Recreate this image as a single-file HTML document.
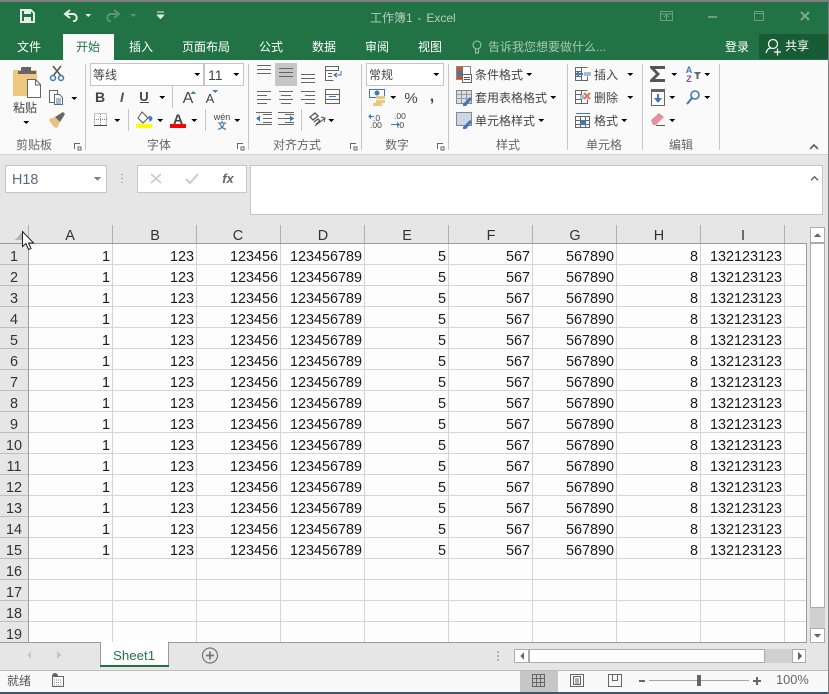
<!DOCTYPE html>
<html lang="zh-CN"><head><meta charset="utf-8"><title>工作簿1 - Excel</title>
<style>
html,body{margin:0;padding:0;background:#e6e6e6;width:829px;height:694px;overflow:hidden}
svg{display:block;position:absolute;left:0;top:0}
text{font-family:"Liberation Sans","Noto Sans CJK SC",sans-serif}
.cj{font-size:12px;fill:#444}
.tb{font-size:12px;fill:#fff}
.gl{font-size:12px;fill:#666;text-anchor:middle}
.c{font-size:14.4px;fill:#1a1a1a;text-anchor:end}
.rh{font-size:14.4px;fill:#333;text-anchor:middle}
.ch{font-size:14.4px;fill:#333;text-anchor:middle}
.ar{fill:#666}
.ln{stroke:#666;stroke-width:1;fill:none}
.sp{stroke:#c6c6c6;stroke-width:1}
.bl{fill:#4a7fb5}
</style></head><body>
<svg width="829" height="694" viewBox="0 0 829 694" xmlns="http://www.w3.org/2000/svg" shape-rendering="crispEdges">
<defs>
<path id="da" d="M0 0h6l-3 3z"/>
<path id="ln3" d="M0 .5h14M0 4.5h14M0 8.5h14"/>
</defs>
<rect width="829" height="694" fill="#e6e6e6"/>
<!-- title -->
<rect y="0" width="829" height="60" fill="#217346"/>
<rect width="829" height="2" fill="#7f7f7f"/>
<rect x="63" y="34" width="51" height="26" fill="#fafafa"/>
<rect x="759" y="34" width="70" height="25" fill="#185c37"/>
<!-- QAT -->
<g fill="none" stroke="#e6efe9" stroke-width="2">
<path d="M21 10h10l3 3v9H21z"/>
</g>
<rect x="24" y="10" width="7" height="4" fill="#e6efe9"/><rect x="24" y="17" width="7" height="5" fill="#e6efe9"/>
<g shape-rendering="geometricPrecision">
<path d="M70 10l-5 4 5 4M65 14h8c5 0 5 8 0 7" fill="none" stroke="#e6efe9" stroke-width="2"/>
<path d="M114 10l5 4-5 4M119 14h-8c-5 0-5 8 0 7" fill="none" stroke="#5d9474" stroke-width="2"/>
</g>
<use href="#da" x="85" y="14" fill="#e6efe9"/><use href="#da" x="130" y="14" fill="#5d9474"/>
<path d="M157 12h7M157 15h7l-3.500 4z" fill="#e6efe9" stroke="#e6efe9" stroke-width=".6"/>
<text x="370" y="22" font-size="12" fill="#b4cfc0" word-spacing="1.500">工作簿1 - Excel</text>
<!-- window controls -->
<g fill="none" stroke="#6f9f83" stroke-width="1">
<rect x="660.500" y="11.500" width="12" height="9"/><path d="M661 14h11M666.500 20v-4M664 17l2.500-2 2.500 2"/>
<rect x="754.500" y="11.500" width="9" height="9"/><path d="M755 13.500h8"/>
</g>
<rect x="708" y="16" width="9" height="2" fill="#6f9f83"/>
<path d="M801 12l8 8M809 12l-8 8" stroke="#7da98e" stroke-width="2" shape-rendering="geometricPrecision"/>
<!-- tabs -->
<text class="tb" x="17" y="51">文件</text>
<text x="76" y="51" font-size="12" fill="#217346">开始</text>
<text class="tb" x="129" y="51">插入</text>
<text class="tb" x="182" y="51">页面布局</text>
<text class="tb" x="259" y="51">公式</text>
<text class="tb" x="312" y="51">数据</text>
<text class="tb" x="365" y="51">审阅</text>
<text class="tb" x="418" y="51">视图</text>
<g shape-rendering="geometricPrecision" fill="none" stroke="#a6c8b2"><circle cx="477" cy="45" r="4"/><path d="M475.500 49v4h3v-4"/></g>
<text x="488" y="51" font-size="12" fill="#a6c8b2">告诉我您想要做什么...</text>
<text class="tb" x="725" y="51">登录</text>
<g shape-rendering="geometricPrecision" fill="none" stroke="#fff" stroke-width="1.200"><circle cx="773" cy="44" r="4.500"/><path d="M766 53c1-4 3-5 5-5M774 52h7M777.500 48.500v7"/></g>
<text class="tb" x="785" y="50">共享</text>
<!-- ribbon -->
<rect y="60" width="829" height="94" fill="#fafafa"/>
<rect y="154" width="829" height="1" fill="#d4d4d4"/>
<g class="sp"><path d="M85.500 64v86M248.500 64v86M361.500 64v86M448.500 64v86M567.500 64v86M642.500 64v86M719.500 64v86"/>
<path d="M172.500 86v22M128.500 109v22M205.500 109v22M301.500 109v22" /></g>
<!-- clipboard group -->
<rect x="13" y="70" width="24" height="26" fill="#edc87e"/>
<rect x="21" y="67" width="10" height="5" rx="1" fill="#666"/><rect x="18" y="71" width="18" height="3" fill="#666"/>
<path d="M27.500 79.500h8l5 5v13h-13z" fill="#fff" stroke="#666"/>
<path d="M35.500 80v5h5" fill="none" stroke="#666"/>
<text class="cj" x="13" y="112" fill="#333">粘贴</text>
<use href="#da" x="23" y="121"/>
<g shape-rendering="geometricPrecision" fill="none">
<path d="M53 66l8 10M61 66l-8 10" stroke="#555" stroke-width="1.500"/>
<circle cx="53" cy="78" r="2.500" stroke="#3f78b5" stroke-width="1.500"/><circle cx="61" cy="78" r="2.500" stroke="#3f78b5" stroke-width="1.500"/>
</g>
<path d="M49.500 90.500h8v12h-8z" fill="#fff" stroke="#666"/>
<path d="M54.500 94.500h5l3 3v7h-8z" fill="#fff" stroke="#666"/>
<path d="M56 99h5M56 101h5M56 103h5" stroke="#3f78b5"/>
<use href="#da" x="71" y="97"/>
<g shape-rendering="geometricPrecision"><path d="M49 119l6-2 5 5-3 6c-3 0-7-5-8-9z" fill="#e8c184"/><path d="M55 117l8-5 2 2-5 8z" fill="#666"/></g>
<text class="gl" x="34" y="149">剪贴板</text>
<path d="M74 143.500h6M74.500 143v6M78 147h3v3h-3z" class="ln"/>
<!-- font group -->
<rect x="90.500" y="63.500" width="113" height="22" fill="#fff" stroke="#c6c6c6"/>
<rect x="204.500" y="63.500" width="39" height="22" fill="#fff" stroke="#c6c6c6"/>
<text class="cj" x="93" y="79">等线</text>
<text x="208" y="80" font-size="14" fill="#444">11</text>
<use href="#da" x="194" y="73" /><use href="#da" x="233" y="73"/>
<text x="100" y="102" font-size="14" font-weight="bold" fill="#444" text-anchor="middle" font-family="Liberation Sans">B</text>
<text x="122" y="102" font-size="14" font-style="italic" font-weight="bold" fill="#555" text-anchor="middle" font-family="Liberation Serif">I</text>
<text x="144" y="101" font-size="13" font-weight="bold" fill="#444" text-anchor="middle">U</text>
<rect x="140" y="102" width="9" height="1" fill="#444"/>
<use href="#da" x="159" y="96"/>
<text x="188" y="103" font-size="16" fill="#444" text-anchor="middle">A</text>
<path d="M190 94l3-3 3 3z" fill="#4a7fb5"/>
<text x="210" y="103" font-size="13" fill="#444" text-anchor="middle">A</text>
<path d="M212 90h6l-3 3z" fill="#4a7fb5"/>
<rect x="94.500" y="113.500" width="12" height="12" fill="none" stroke="#888" stroke-dasharray="1 1"/>
<path d="M100.500 114v12M94 119.500h13" stroke="#888" stroke-dasharray="1 1"/>
<path d="M94 125.500h13" stroke="#444"/>
<use href="#da" x="114" y="119"/>
<path d="M142 112l6 6-5 5-5-5z" fill="#fff" stroke="#555" shape-rendering="geometricPrecision"/>
<path d="M148 117a2.500 2.500 0 0 1 4 3l-2 2z" fill="#4a7fb5" shape-rendering="geometricPrecision"/>
<rect x="136" y="124" width="16" height="4" fill="#ffff00"/>
<use href="#da" x="157" y="119"/>
<text x="178" y="124" font-size="14" font-weight="bold" fill="#444" text-anchor="middle">A</text>
<rect x="170" y="124" width="16" height="4" fill="#ff0000"/>
<use href="#da" x="191" y="119"/>
<text x="222" y="120" font-size="9" fill="#444" text-anchor="middle">wén</text>
<text x="222" y="129" font-size="9" font-weight="bold" fill="#3f78b5" text-anchor="middle">文</text>
<use href="#da" x="234" y="119"/>
<text class="gl" x="159" y="149">字体</text>
<path d="M237 143.500h6M237.500 143v6M241 147h3v3h-3z" class="ln"/>
<!-- align group -->
<rect x="275" y="63" width="22" height="23" fill="#c6c6c6"/>
<g class="ln">
<use href="#ln3" x="257" y="65"/><use href="#ln3" x="279" y="68"/><use href="#ln3" x="301" y="74"/>
<path d="M257 91.500h14M257 95.500h10M257 99.500h14M257 103.500h10"/>
<path d="M279 91.500h14M281 95.500h10M279 99.500h14M281 103.500h10"/>
<path d="M301 91.500h14M305 95.500h10M301 99.500h14M305 103.500h10"/>
<path d="M325.500 66.500h13v4h-13zM325.500 70.500v10h8M328 73.500h4M328 76.500h4"/>
<rect x="325.500" y="89.500" width="14" height="14"/><path d="M326 94.500h13M326 99.500h13"/>
<path d="M263 114.500h9M263 118.500h9M263 122.500h9M256 124.500h16M256 112.500h16"/>
<path d="M285 114.500h9M285 118.500h9M285 122.500h9M278 124.500h16M278 112.500h16"/>
</g>
<path d="M341 71v4h-6M337 73l-3 2 3 2" fill="none" stroke="#3f78b5"/>
<path d="M329 96.500h7" stroke="#3f78b5"/>
<path d="M256 118.500l4-3v6zM262 118.500h-3" fill="#3f78b5"/><path d="M294 118.500l-4-3v6z" fill="#3f78b5"/><path d="M278 118h7v1h-7z" fill="#3f78b5"/>
<g shape-rendering="geometricPrecision" fill="none" stroke="#555"><path d="M310 117l5-4 3 3-5 4zM314 122l4-3 2 2-4 3" stroke-width="1.300"/><path d="M315 126l10-8M321 117l4 1-1 4"/></g>
<use href="#da" x="328" y="119"/>
<text class="gl" x="297" y="149">对齐方式</text>
<path d="M350 143.500h6M350.500 143v6M354 147h3v3h-3z" class="ln"/>
<!-- number group -->
<rect x="366.500" y="63.500" width="77" height="22" fill="#fff" stroke="#c6c6c6"/>
<text class="cj" x="369" y="79">常规</text>
<use href="#da" x="433" y="73"/>
<rect x="369.500" y="89.500" width="15" height="8" fill="#fff" stroke="#3f78b5"/><circle cx="377" cy="93" r="2.500" fill="#3f78b5" shape-rendering="geometricPrecision"/>
<rect x="376" y="96" width="9" height="3" fill="#edc87e"/><rect x="376" y="100" width="9" height="3" fill="#edc87e"/><rect x="373" y="103" width="9" height="3" fill="#edc87e"/>
<use href="#da" x="390" y="96"/>
<text x="411" y="103" font-size="15" fill="#444" text-anchor="middle">%</text>
<text x="432" y="101" font-size="16" font-weight="bold" fill="#444" text-anchor="middle">,</text>
<text x="373" y="121" font-size="8.500" fill="#444">.0</text><text x="370" y="128" font-size="8.500" fill="#444">.00</text>
<path d="M369 116.500h5" stroke="#3f78b5"/><path d="M368 116.500l3-2.500v5z" fill="#3f78b5"/>
<text x="394" y="119" font-size="8.500" fill="#444">.00</text><text x="397" y="128" font-size="8.500" fill="#444">.0</text>
<path d="M391 124.500h6" stroke="#3f78b5"/><path d="M400 124.500l-3-2.500v5z" fill="#3f78b5"/>
<text class="gl" x="397" y="149">数字</text>
<path d="M437 143.500h6M437.500 143v6M441 147h3v3h-3z" class="ln"/>
<!-- styles -->
<rect x="456.500" y="66.500" width="14" height="13" fill="#fff" stroke="#888"/>
<rect x="457" y="67" width="6" height="4" fill="#d0542b"/><rect x="457" y="71" width="6" height="4" fill="#3f78b5"/><rect x="457" y="75" width="6" height="4" fill="#d0542b"/>
<rect x="462.500" y="74.500" width="9" height="8" fill="#fff" stroke="#666"/><path d="M464 77.500h6M464 79.500h6" stroke="#555"/>
<text class="cj" x="475" y="79">条件格式</text><use href="#da" x="526" y="73"/>
<rect x="456.500" y="90.500" width="15" height="13" fill="#d6dfea" stroke="#888"/><path d="M456 94.500h15M456 98.500h15M461.500 91v12M466.500 91v12" stroke="#999"/>
<path d="M463 104l7-7 2 2-6 7h-3z" fill="#3f78b5" shape-rendering="geometricPrecision"/>
<text class="cj" x="475" y="102">套用表格格式</text><use href="#da" x="550" y="96"/>
<rect x="456.500" y="112.500" width="15" height="13" fill="#c9d6e5" stroke="#888"/>
<path d="M463 127l7-7 2 2-6 7h-3z" fill="#3f78b5" shape-rendering="geometricPrecision"/>
<text class="cj" x="475" y="125">单元格样式</text><use href="#da" x="538" y="119"/>
<text class="gl" x="508" y="149">样式</text>
<!-- cells -->
<g class="ln" stroke="#666"><path d="M575.500 67.500h6v13h-6zM581.500 67.500h6M575.500 71.500h6M575.500 76.500h6M581.500 80.500h6v-4"/>
<path d="M575.500 90.500h6v13h-6zM581.500 90.500h6M575.500 94.500h6M575.500 99.500h6M581.500 103.500h6v-4"/>
<rect x="575.500" y="116.500" width="14" height="11"/><path d="M576 120.500h13M576 124.500h13M580.500 117v10M585.500 117v10"/></g>
<rect x="584" y="72" width="7" height="4" fill="#a9bdd3"/><path d="M576 74h7" stroke="#3f78b5" stroke-width="2"/><path d="M575 74l4-3v6z" fill="#3f78b5"/>
<rect x="580" y="95" width="4" height="4" fill="#a9bdd3"/>
<path d="M584 93l6 6M590 93l-6 6" stroke="#e2705a" stroke-width="2" shape-rendering="geometricPrecision"/>
<rect x="580" y="120" width="6" height="5" fill="#3f78b5"/><path d="M576 113.500h14" stroke="#3f78b5"/>
<text class="cj" x="594" y="79">插入</text><use href="#da" x="627" y="73"/>
<text class="cj" x="594" y="102">删除</text><use href="#da" x="627" y="96"/>
<text class="cj" x="594" y="125">格式</text><use href="#da" x="621" y="119"/>
<text class="gl" x="604" y="149">单元格</text>
<!-- edit -->
<path d="M650 66h15v3h-10l5 5-5 5h10v3h-15v-2l6-6-6-6z" fill="#555" shape-rendering="geometricPrecision"/>
<use href="#da" x="671" y="73"/>
<text x="689" y="73" font-size="9" font-weight="bold" fill="#3f78b5" text-anchor="middle">A</text>
<text x="689" y="82" font-size="9" font-weight="bold" fill="#7b4ea3" text-anchor="middle">Z</text>
<path d="M694 72h7l-2.500 3v4h-2v-4z" fill="#666"/>
<use href="#da" x="704" y="73"/>
<rect x="651.500" y="89.500" width="13" height="16" fill="#fff" stroke="#666"/><rect x="651" y="89" width="14" height="3" fill="#666"/>
<path d="M658 94v7" stroke="#3f78b5" stroke-width="2"/><path d="M654 98l4 5 4-5z" fill="#3f78b5"/>
<use href="#da" x="669" y="96"/>
<g shape-rendering="geometricPrecision"><circle cx="695" cy="95" r="4" fill="none" stroke="#3f78b5" stroke-width="1.600"/><path d="M692 98l-5 6" stroke="#3f78b5" stroke-width="2"/></g>
<use href="#da" x="704" y="96"/>
<path d="M651 120l8-7 5 4-8 8h-3z" fill="#e8909a" shape-rendering="geometricPrecision"/>
<path d="M656 125.500h9" stroke="#555"/>
<use href="#da" x="669" y="119"/>
<text class="gl" x="681" y="149">编辑</text>
<path d="M810 149l4-4 4 4" fill="none" stroke="#666" stroke-width="1.500"/>
<!-- formula bar -->
<rect x="5.500" y="165.500" width="101" height="27" fill="#fff" stroke="#c6c6c6"/>
<text x="12" y="184" font-size="14.400" fill="#5b6b7b">H18</text>
<path d="M94 177h7l-3.500 4z" fill="#808080"/>
<path d="M122 174v1M122 178v1M122 182v1" stroke="#aaa" stroke-width="2"/>
<rect x="137.500" y="165.500" width="109" height="27" fill="#fff" stroke="#c6c6c6"/>
<path d="M151 174l10 9M161 174l-10 9" stroke="#ccc" stroke-width="1.800" shape-rendering="geometricPrecision"/>
<path d="M186 179l4 4 8-9" stroke="#ccc" stroke-width="2" fill="none" shape-rendering="geometricPrecision"/>
<text x="228" y="183" font-size="13" font-style="italic" font-weight="bold" fill="#666" text-anchor="middle" font-family="Liberation Serif">fx</text>
<rect x="250.500" y="165.500" width="572" height="49" fill="#fff" stroke="#c6c6c6"/>
<path d="M811 180l3.500-3 3.500 3" fill="none" stroke="#666" stroke-width="1.500"/>
<!-- grid -->
<rect x="29" y="244" width="777" height="398" fill="#fdfdfd"/>
<g stroke="#d4d4d4">
<path d="M29 264.500h777M29 285.500h777M29 306.500h777M29 327.500h777M29 348.500h777M29 369.500h777M29 390.500h777M29 411.500h777M29 432.500h777M29 453.500h777M29 474.500h777M29 495.500h777M29 516.500h777M29 537.500h777M29 558.500h777M29 579.500h777M29 600.500h777M29 621.500h777"/>
<path d="M112.500 244v398M196.500 244v398M280.500 244v398M364.500 244v398M448.500 244v398M532.500 244v398M616.500 244v398M700.500 244v398M784.500 244v398"/>
<path d="M0 264.500h28M0 285.500h28M0 306.500h28M0 327.500h28M0 348.500h28M0 369.500h28M0 390.500h28M0 411.500h28M0 432.500h28M0 453.500h28M0 474.500h28M0 495.500h28M0 516.500h28M0 537.500h28M0 558.500h28M0 579.500h28M0 600.500h28M0 621.500h28" stroke="#bdbdbd"/>
</g>
<g stroke="#b0b0b0"><path d="M28.500 225v18M112.500 225v18M196.500 225v18M280.500 225v18M364.500 225v18M448.500 225v18M532.500 225v18M616.500 225v18M700.500 225v18M784.500 225v18"/></g>
<g stroke="#9a9a9a"><path d="M0 243.500h807M28.500 243v400M806.500 243v400M0 642.500h100M169 642.500h638"/></g>
<path d="M15 240l8-9v9z" fill="#b3b3b3"/>
<g class="ch"><text class="ch" x="70" y="240">A</text><text class="ch" x="155" y="240">B</text><text class="ch" x="238" y="240">C</text><text class="ch" x="323" y="240">D</text><text class="ch" x="407" y="240">E</text><text class="ch" x="491" y="240">F</text><text class="ch" x="575" y="240">G</text><text class="ch" x="659" y="240">H</text><text class="ch" x="743" y="240">I</text></g>
<text class="rh" x="14" y="261">1</text><text class="rh" x="14" y="282">2</text><text class="rh" x="14" y="303">3</text><text class="rh" x="14" y="324">4</text><text class="rh" x="14" y="345">5</text><text class="rh" x="14" y="366">6</text><text class="rh" x="14" y="387">7</text><text class="rh" x="14" y="408">8</text><text class="rh" x="14" y="429">9</text><text class="rh" x="14" y="450">10</text><text class="rh" x="14" y="471">11</text><text class="rh" x="14" y="492">12</text><text class="rh" x="14" y="513">13</text><text class="rh" x="14" y="534">14</text><text class="rh" x="14" y="555">15</text><text class="rh" x="14" y="576">16</text><text class="rh" x="14" y="597">17</text><text class="rh" x="14" y="618">18</text><text class="rh" x="14" y="639">19</text>
<text class="c" y="261"><tspan x="110">1</tspan><tspan x="194">123</tspan><tspan x="278">123456</tspan><tspan x="362">123456789</tspan><tspan x="446">5</tspan><tspan x="530">567</tspan><tspan x="614">567890</tspan><tspan x="698">8</tspan><tspan x="782">132123123</tspan></text>
<text class="c" y="282"><tspan x="110">1</tspan><tspan x="194">123</tspan><tspan x="278">123456</tspan><tspan x="362">123456789</tspan><tspan x="446">5</tspan><tspan x="530">567</tspan><tspan x="614">567890</tspan><tspan x="698">8</tspan><tspan x="782">132123123</tspan></text>
<text class="c" y="303"><tspan x="110">1</tspan><tspan x="194">123</tspan><tspan x="278">123456</tspan><tspan x="362">123456789</tspan><tspan x="446">5</tspan><tspan x="530">567</tspan><tspan x="614">567890</tspan><tspan x="698">8</tspan><tspan x="782">132123123</tspan></text>
<text class="c" y="324"><tspan x="110">1</tspan><tspan x="194">123</tspan><tspan x="278">123456</tspan><tspan x="362">123456789</tspan><tspan x="446">5</tspan><tspan x="530">567</tspan><tspan x="614">567890</tspan><tspan x="698">8</tspan><tspan x="782">132123123</tspan></text>
<text class="c" y="345"><tspan x="110">1</tspan><tspan x="194">123</tspan><tspan x="278">123456</tspan><tspan x="362">123456789</tspan><tspan x="446">5</tspan><tspan x="530">567</tspan><tspan x="614">567890</tspan><tspan x="698">8</tspan><tspan x="782">132123123</tspan></text>
<text class="c" y="366"><tspan x="110">1</tspan><tspan x="194">123</tspan><tspan x="278">123456</tspan><tspan x="362">123456789</tspan><tspan x="446">5</tspan><tspan x="530">567</tspan><tspan x="614">567890</tspan><tspan x="698">8</tspan><tspan x="782">132123123</tspan></text>
<text class="c" y="387"><tspan x="110">1</tspan><tspan x="194">123</tspan><tspan x="278">123456</tspan><tspan x="362">123456789</tspan><tspan x="446">5</tspan><tspan x="530">567</tspan><tspan x="614">567890</tspan><tspan x="698">8</tspan><tspan x="782">132123123</tspan></text>
<text class="c" y="408"><tspan x="110">1</tspan><tspan x="194">123</tspan><tspan x="278">123456</tspan><tspan x="362">123456789</tspan><tspan x="446">5</tspan><tspan x="530">567</tspan><tspan x="614">567890</tspan><tspan x="698">8</tspan><tspan x="782">132123123</tspan></text>
<text class="c" y="429"><tspan x="110">1</tspan><tspan x="194">123</tspan><tspan x="278">123456</tspan><tspan x="362">123456789</tspan><tspan x="446">5</tspan><tspan x="530">567</tspan><tspan x="614">567890</tspan><tspan x="698">8</tspan><tspan x="782">132123123</tspan></text>
<text class="c" y="450"><tspan x="110">1</tspan><tspan x="194">123</tspan><tspan x="278">123456</tspan><tspan x="362">123456789</tspan><tspan x="446">5</tspan><tspan x="530">567</tspan><tspan x="614">567890</tspan><tspan x="698">8</tspan><tspan x="782">132123123</tspan></text>
<text class="c" y="471"><tspan x="110">1</tspan><tspan x="194">123</tspan><tspan x="278">123456</tspan><tspan x="362">123456789</tspan><tspan x="446">5</tspan><tspan x="530">567</tspan><tspan x="614">567890</tspan><tspan x="698">8</tspan><tspan x="782">132123123</tspan></text>
<text class="c" y="492"><tspan x="110">1</tspan><tspan x="194">123</tspan><tspan x="278">123456</tspan><tspan x="362">123456789</tspan><tspan x="446">5</tspan><tspan x="530">567</tspan><tspan x="614">567890</tspan><tspan x="698">8</tspan><tspan x="782">132123123</tspan></text>
<text class="c" y="513"><tspan x="110">1</tspan><tspan x="194">123</tspan><tspan x="278">123456</tspan><tspan x="362">123456789</tspan><tspan x="446">5</tspan><tspan x="530">567</tspan><tspan x="614">567890</tspan><tspan x="698">8</tspan><tspan x="782">132123123</tspan></text>
<text class="c" y="534"><tspan x="110">1</tspan><tspan x="194">123</tspan><tspan x="278">123456</tspan><tspan x="362">123456789</tspan><tspan x="446">5</tspan><tspan x="530">567</tspan><tspan x="614">567890</tspan><tspan x="698">8</tspan><tspan x="782">132123123</tspan></text>
<text class="c" y="555"><tspan x="110">1</tspan><tspan x="194">123</tspan><tspan x="278">123456</tspan><tspan x="362">123456789</tspan><tspan x="446">5</tspan><tspan x="530">567</tspan><tspan x="614">567890</tspan><tspan x="698">8</tspan><tspan x="782">132123123</tspan></text>
<!-- cursor -->
<path d="M22.500 231.500v15l3.500-3 2.500 6 2.500-1-2.500-5.500h5z" fill="#fff" stroke="#222" shape-rendering="geometricPrecision"/>
<!-- v scrollbar -->
<rect x="810" y="243" width="15" height="385" fill="#d0d0d0"/>
<rect x="810.500" y="227.500" width="14" height="15" fill="#fff" stroke="#ababab"/>
<path d="M814 237l3.500-4 3.500 4z" fill="#666"/>
<rect x="810.500" y="243.500" width="14" height="364" fill="#fff" stroke="#ababab"/>
<rect x="810.500" y="628.500" width="14" height="14" fill="#fff" stroke="#ababab"/>
<path d="M814 634h7l-3.500 4z" fill="#666"/>
<!-- sheet tabs -->
<rect x="100" y="642" width="69" height="23" fill="#fff"/>
<path d="M100.500 642v24M168.500 642v24" stroke="#9a9a9a"/>
<rect x="100" y="665" width="69" height="2" fill="#217346"/>
<text x="113" y="660" font-size="13.300" fill="#217346">Sheet1</text>
<path d="M31 651l-4 4 4 4zM57 651l4 4-4 4z" fill="#c4c4c4"/>
<g shape-rendering="geometricPrecision"><circle cx="210" cy="655.500" r="7.500" fill="none" stroke="#777" stroke-width="1.200"/><path d="M206 655.500h8M210 651.500v8" stroke="#777" stroke-width="1.800"/></g>
<path d="M498 651v2M498 655v2M498 659v2" stroke="#b0b0b0" stroke-width="2"/>
<rect x="514" y="649" width="292" height="14" fill="#d0d0d0"/>
<rect x="514.500" y="649.500" width="14" height="13" fill="#fff" stroke="#ababab"/>
<rect x="529.500" y="649.500" width="235" height="13" fill="#fff" stroke="#ababab"/>
<rect x="792.500" y="649.500" width="13" height="13" fill="#fff" stroke="#ababab"/>
<path d="M524 652l-4 4 4 4zM798 652l4 4-4 4z" fill="#666"/>
<!-- status bar -->
<rect y="670" width="829" height="22" fill="#f9f9f9"/>
<rect y="670" width="829" height="1" fill="#bdbdbd"/>
<rect y="692" width="829" height="1" fill="#555"/>
<rect y="693" width="829" height="1" fill="#1b5b8f"/>
<rect x="520" y="671" width="38" height="21" fill="#c6c6c6"/>
<text x="7" y="685" font-size="12" fill="#555">就绪</text>
<circle cx="55" cy="676" r="3" fill="#666" shape-rendering="geometricPrecision"/>
<rect x="52.500" y="676.500" width="11" height="10" fill="#fff" stroke="#666"/><path d="M54 680h8M54 682.500h8M54 685h8" stroke="#888" stroke-dasharray="1 1"/>
<g class="ln"><rect x="532.500" y="674.500" width="12" height="12"/><path d="M533 678.500h12M533 682.500h12M536.500 675v12M540.500 675v12"/>
<rect x="570.500" y="674.500" width="13" height="12"/><rect x="573.500" y="676.500" width="7" height="8"/><path d="M575 679h4M575 681h4M575 683h4"/>
<rect x="608.500" y="674.500" width="13" height="12"/><path d="M612.500 675v5.500h5v-5.500"/></g>
<rect x="639" y="680" width="6" height="2" fill="#666"/>
<rect x="649" y="680" width="100" height="1" fill="#a6a6a6"/>
<rect x="697" y="675" width="4" height="11" fill="#666"/>
<path d="M753 681h8M757 677v8" stroke="#666" stroke-width="2"/>
<text x="776" y="684" font-size="12.800" fill="#666">100%</text>
<!-- window border -->
<rect x="828" y="0" width="1" height="694" fill="#7f7f7f"/>
</svg>
</body></html>
